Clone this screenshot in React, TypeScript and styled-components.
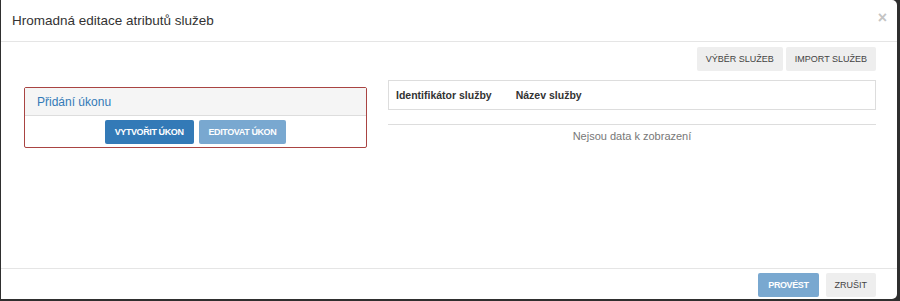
import styled, { createGlobalStyle } from "styled-components";

const GlobalStyle = createGlobalStyle`
  html, body {
    margin: 0;
    padding: 0;
    background: #2f2f2f;
  }
  body {
    font-family: "Liberation Sans", Arial, sans-serif;
    color: #333;
  }
`;

const Backdrop = styled.div`
  width: 900px;
  height: 301px;
  box-sizing: border-box;
  padding: 0 3px 2px 1px;
  background: #2f2f2f;
`;

const Modal = styled.div`
  height: 100%;
  box-sizing: border-box;
  background: #fff;
  border-radius: 0 5px 5px 0;
  display: flex;
  flex-direction: column;
`;

const Header = styled.div`
  height: 42px;
  box-sizing: border-box;
  border-bottom: 1px solid #e5e5e5;
  display: flex;
  align-items: center;
  justify-content: space-between;
  padding: 0 10px 0 11px;
`;

const Title = styled.h4`
  margin: 0;
  font-size: 13.5px;
  font-weight: normal;
  color: #333;
`;

const Close = styled.span`
  font-size: 16px;
  font-weight: bold;
  color: #c4c4c4;
  line-height: 1;
  margin-top: -6px;
`;

const Body = styled.div`
  flex: 1;
  padding: 5px 21px 0 23px;
  display: flex;
  flex-direction: column;
`;

const Toolbar = styled.div`
  display: flex;
  justify-content: flex-end;
  gap: 3px;
`;

const Button = styled.button<{ $variant?: "default" | "primary"; $disabled?: boolean; $bold?: boolean }>`
  height: 24px;
  padding: 0 ${(p) => (p.$bold ? 9 : 8)}px;
  border: 1px solid transparent;
  border-radius: 2px;
  font-family: "Liberation Sans", Arial, sans-serif;
  font-size: 9px;
  text-transform: uppercase;
  font-weight: ${(p) => (p.$bold ? "bold" : "normal")};
  letter-spacing: ${(p) => (p.$bold ? "-0.4px" : "0")};
  background: ${(p) => (p.$variant === "primary" ? "#337ab7" : "#eeeeee")};
  color: ${(p) => (p.$variant === "primary" ? "#fff" : "#444")};
  opacity: ${(p) => (p.$disabled ? 0.65 : 1)};
  cursor: pointer;
`;

const Columns = styled.div`
  display: flex;
  gap: 21px;
  margin-top: 9px;
`;

const Panel = styled.div`
  width: 343px;
  margin-top: 7px;
  align-self: flex-start;
  box-sizing: border-box;
  border: 1px solid #a94442;
  border-radius: 2px;
`;

const PanelHeading = styled.div`
  height: 28px;
  box-sizing: border-box;
  background: #f5f5f5;
  border-bottom: 1px solid #dddddd;
  color: #337ab7;
  font-size: 12px;
  display: flex;
  align-items: center;
  padding: 0 12px;
`;

const PanelBody = styled.div`
  display: flex;
  justify-content: center;
  gap: 5px;
  padding: 4px 0 3px;
`;

const TableArea = styled.div`
  flex: 1;
  display: flex;
  flex-direction: column;
`;

const HeadRow = styled.div`
  height: 30px;
  box-sizing: border-box;
  border: 1px solid #dddddd;
  display: flex;
  align-items: center;
  padding: 0 7px;
  gap: 24px;
`;

const HeadCell = styled.div`
  font-size: 10.5px;
  font-weight: bold;
  color: #333;
`;

const Empty = styled.div`
  margin-top: 14px;
  border-top: 1px solid #dddddd;
  text-align: center;
  font-size: 11px;
  color: #777;
  padding-top: 5px;
`;

const Footer = styled.div`
  height: 31px;
  box-sizing: border-box;
  border-top: 1px solid #e5e5e5;
  display: flex;
  justify-content: flex-end;
  align-items: flex-start;
  gap: 7px;
  padding: 4px 21px 0 0;
`;

export default function App() {
  return (
    <>
      <GlobalStyle />
      <Backdrop>
        <Modal>
          <Header>
            <Title>Hromadná editace atributů služeb</Title>
            <Close>×</Close>
          </Header>
          <Body>
            <Toolbar>
              <Button>Výběr služeb</Button>
              <Button>Import služeb</Button>
            </Toolbar>
            <Columns>
              <Panel>
                <PanelHeading>Přidání úkonu</PanelHeading>
                <PanelBody>
                  <Button $variant="primary" $bold>Vytvořit úkon</Button>
                  <Button $variant="primary" $bold $disabled>Editovat úkon</Button>
                </PanelBody>
              </Panel>
              <TableArea>
                <HeadRow>
                  <HeadCell>Identifikátor služby</HeadCell>
                  <HeadCell>Název služby</HeadCell>
                </HeadRow>
                <Empty>Nejsou data k zobrazení</Empty>
              </TableArea>
            </Columns>
          </Body>
          <Footer>
            <Button $variant="primary" $bold $disabled>Provést</Button>
            <Button>Zrušit</Button>
          </Footer>
        </Modal>
      </Backdrop>
    </>
  );
}
